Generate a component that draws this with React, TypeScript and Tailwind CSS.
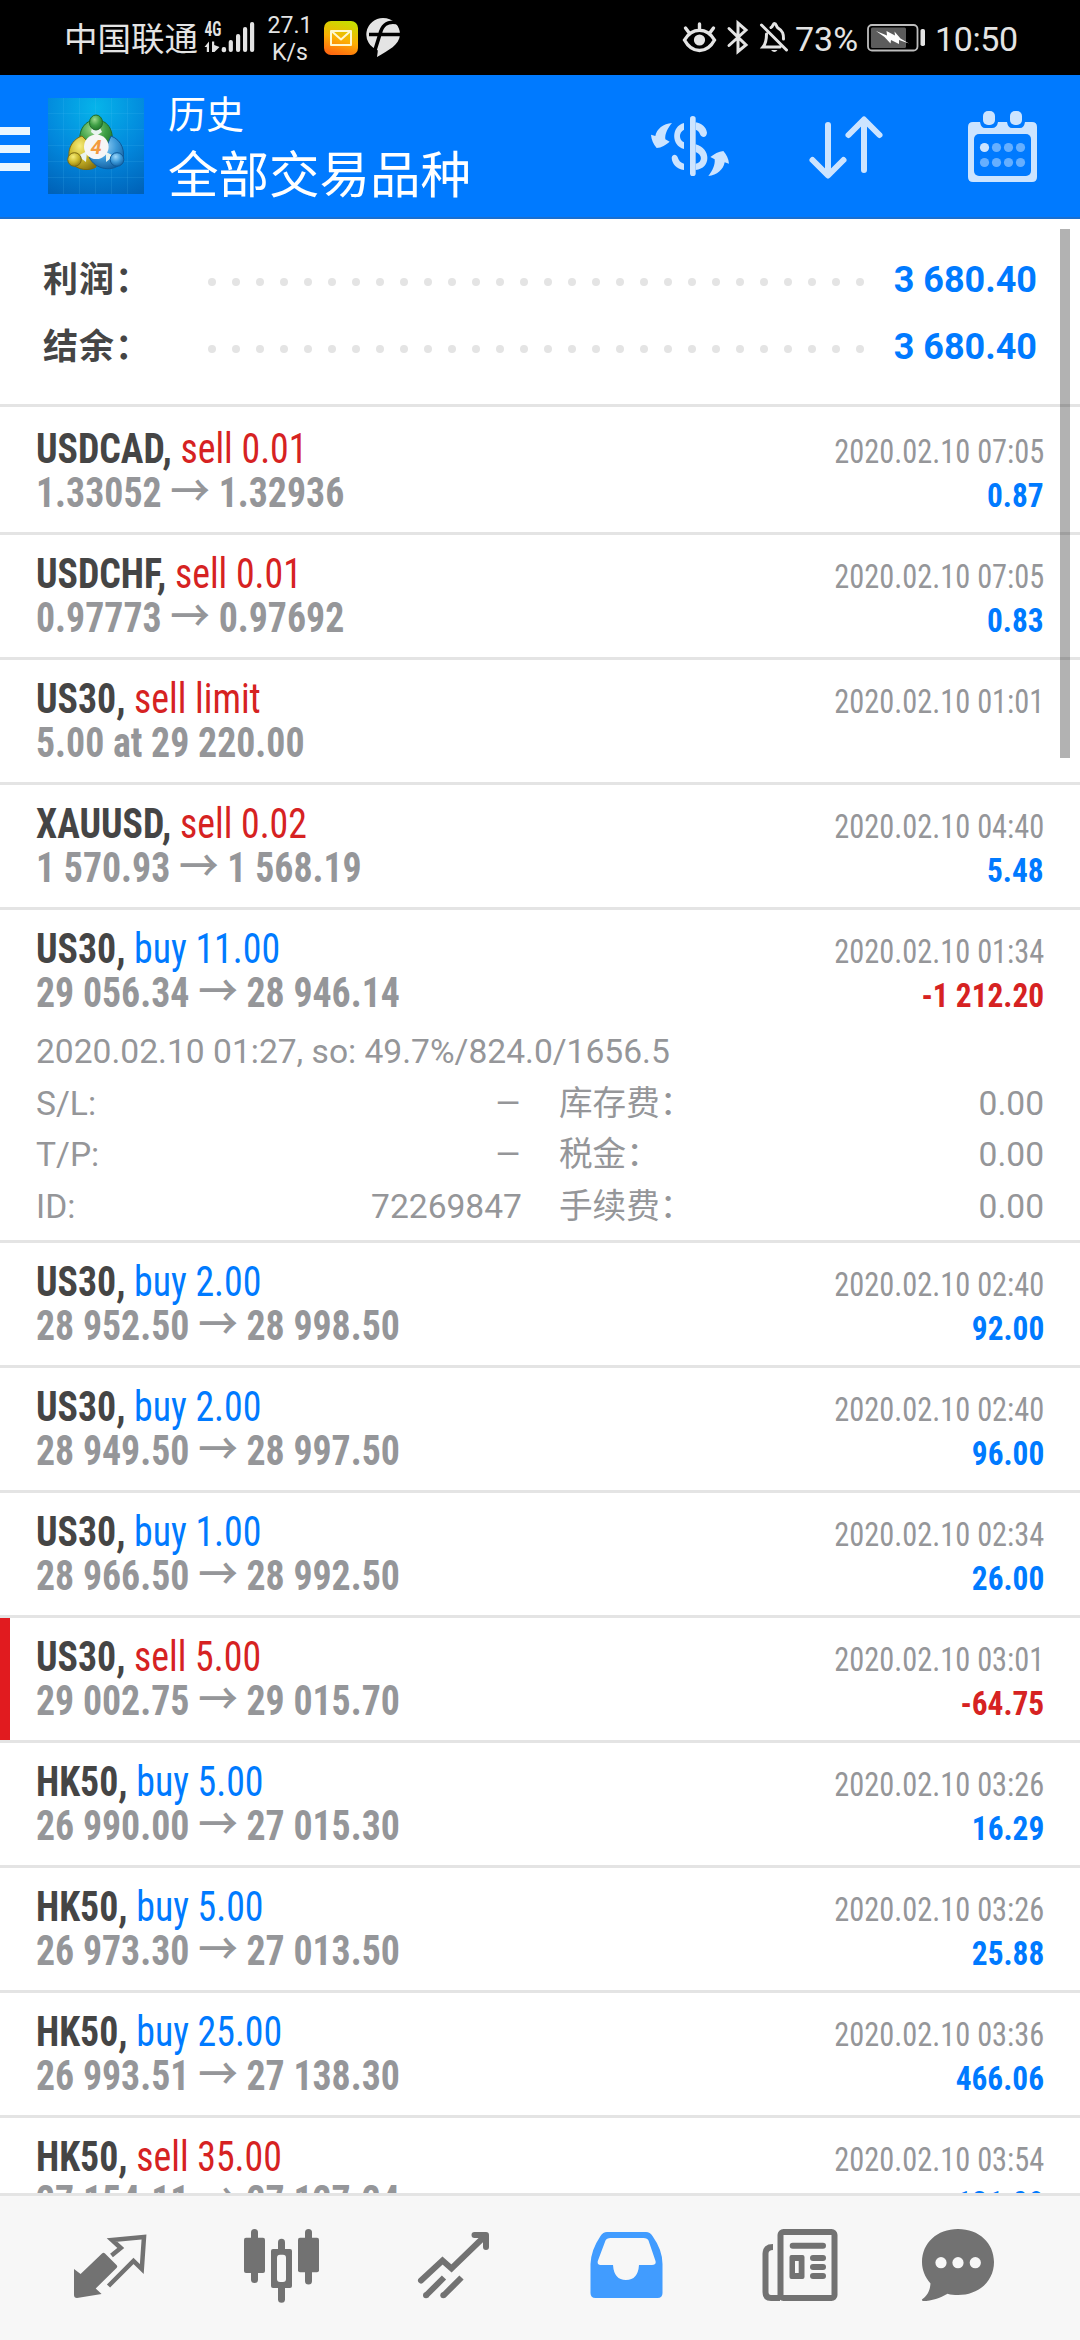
import type { ReactNode } from "react";

type Detail = { label: string; value: string; label2: string; value2: string };

type Deal = {
  symbol: string;
  action: string;
  side: "buy" | "sell";
  from: string;
  to?: string;
  time: string;
  profit?: string;
  marked?: boolean;
  comment?: string;
  details?: Detail[];
};

const summary = [
  { label: "利润：", value: "3 680.40" },
  { label: "结余：", value: "3 680.40" },
];

const deals: Deal[] = [
  { symbol: "USDCAD", action: "sell 0.01", side: "sell", from: "1.33052", to: "1.32936", time: "2020.02.10 07:05", profit: "0.87" },
  { symbol: "USDCHF", action: "sell 0.01", side: "sell", from: "0.97773", to: "0.97692", time: "2020.02.10 07:05", profit: "0.83" },
  { symbol: "US30", action: "sell limit", side: "sell", from: "5.00 at 29 220.00", time: "2020.02.10 01:01" },
  { symbol: "XAUUSD", action: "sell 0.02", side: "sell", from: "1 570.93", to: "1 568.19", time: "2020.02.10 04:40", profit: "5.48" },
  {
    symbol: "US30",
    action: "buy 11.00",
    side: "buy",
    from: "29 056.34",
    to: "28 946.14",
    time: "2020.02.10 01:34",
    profit: "-1 212.20",
    comment: "2020.02.10 01:27, so: 49.7%/824.0/1656.5",
    details: [
      { label: "S/L:", value: "–", label2: "库存费：", value2: "0.00" },
      { label: "T/P:", value: "–", label2: "税金：", value2: "0.00" },
      { label: "ID:", value: "72269847", label2: "手续费：", value2: "0.00" },
    ],
  },
  { symbol: "US30", action: "buy 2.00", side: "buy", from: "28 952.50", to: "28 998.50", time: "2020.02.10 02:40", profit: "92.00" },
  { symbol: "US30", action: "buy 2.00", side: "buy", from: "28 949.50", to: "28 997.50", time: "2020.02.10 02:40", profit: "96.00" },
  { symbol: "US30", action: "buy 1.00", side: "buy", from: "28 966.50", to: "28 992.50", time: "2020.02.10 02:34", profit: "26.00" },
  { symbol: "US30", action: "sell 5.00", side: "sell", from: "29 002.75", to: "29 015.70", time: "2020.02.10 03:01", profit: "-64.75", marked: true },
  { symbol: "HK50", action: "buy 5.00", side: "buy", from: "26 990.00", to: "27 015.30", time: "2020.02.10 03:26", profit: "16.29" },
  { symbol: "HK50", action: "buy 5.00", side: "buy", from: "26 973.30", to: "27 013.50", time: "2020.02.10 03:26", profit: "25.88" },
  { symbol: "HK50", action: "buy 25.00", side: "buy", from: "26 993.51", to: "27 138.30", time: "2020.02.10 03:36", profit: "466.06" },
  { symbol: "HK50", action: "sell 35.00", side: "sell", from: "27 154.11", to: "27 127.24", time: "2020.02.10 03:54", profit: "121.09" },
];

function StatusBar() {
  return (
    <div className="flex h-[75px] shrink-0 bg-black text-[#e4e4e4]">
      <span className="ml-[64px] mt-[16px] w-[140px] text-[33.5px] leading-[48px] whitespace-nowrap">中国联通</span>
      <svg className="h-[75px] w-[54px]" viewBox="204 0 54 75" fill="#e4e4e4">
        <text x="204.5" y="36" fontSize="19.5" fontWeight="600" textLength="17" lengthAdjust="spacingAndGlyphs" fontFamily="Roboto Condensed">
          4G
        </text>
        <path d="M204.5 47 L209 41.5 V52 H206.8 V47 Z M212 41.5 H214.2 V45 L219.5 47 L214.5 52 H212 Z" />
        <rect x="221.7" y="47" width="4.4" height="5.2" rx="2" />
        <rect x="228.7" y="40" width="4.2" height="12" rx="2" />
        <rect x="236" y="34" width="4.2" height="18" rx="2" />
        <rect x="243" y="27" width="4.2" height="25" rx="2" />
        <rect x="250" y="22" width="4.2" height="30" rx="2" />
      </svg>
      <div className="mt-[12px] w-[64px] text-center text-[23px] leading-[27px]">
        <div>27.1</div>
        <div>K/s</div>
      </div>
      <svg className="ml-[2px] h-[75px] w-[34px]" viewBox="324 0 34 75">
        <defs>
          <linearGradient id="mail" x1="0.7" y1="0" x2="0.4" y2="1">
            <stop offset="0" stopColor="#c5e000" />
            <stop offset="0.55" stopColor="#fbb004" />
            <stop offset="1" stopColor="#ff6a10" />
          </linearGradient>
        </defs>
        <rect x="324" y="21" width="34" height="34" rx="7" fill="url(#mail)" />
        <path d="M331 31 H351 V45 H331 Z M332 31.5 L341 39.5 L350 31.5" fill="none" stroke="#fff8d0" strokeWidth="2" strokeLinejoin="round" />
      </svg>
      <svg className="ml-[8px] h-[75px] w-[34px]" viewBox="366 0 34 75">
        <path d="M383 18 A17 16.5 0 0 1 400 35 C399 45 389 50 377 57 C377.5 53 378 51 377.5 50 A17 16.5 0 0 1 383 18 Z" fill="#e4e4e4" />
        <path d="M369 34.5 H400 M399 23 C386 20 382 26 380 34 L375 50" fill="none" stroke="#000" strokeWidth="3.6" />
      </svg>
      <svg className="ml-[282px] h-[75px] w-[108px]" viewBox="682 0 108 75" fill="none" stroke="#e4e4e4" strokeWidth="3.4" strokeLinecap="round">
        <path d="M684.5 40 C692 27 707 27 714.5 40 C707 54 692 54 684.5 40 Z M699.5 28 V24 M688.5 32 L685.5 28 M710.5 32 L713.5 28" />
        <circle cx="699.5" cy="40" r="5.6" fill="#e4e4e4" stroke="none" />
        <path d="M729 28.5 L746 45 L738 51.5 V23 L746 30 L729 45.5" strokeWidth="3" />
        <path d="M761.5 25 L786.5 50 M766.5 34 C766.5 41 765.5 44 763 47 H780 M771 27.5 C773 26.5 773 23.5 774.5 23.5 C776.5 23.5 776 26.5 778 28 C783 31 783.5 34 783.5 39" strokeWidth="3" />
        <path d="M771 50 H777.5 Q774.5 54 771 50 Z" fill="#e4e4e4" stroke="none" />
      </svg>
      <span className="ml-[5px] mt-[15px] w-[71px] text-[34px] leading-[48px]">73%</span>
      <svg className="h-[75px] w-[60px]" viewBox="866 0 60 75">
        <rect x="868" y="25" width="49.5" height="25.5" rx="4" fill="none" stroke="#bdbdbd" strokeWidth="1.8" />
        <rect x="871" y="27.5" width="35" height="20.5" rx="1.5" fill="#5c5c5c" />
        <rect x="920.5" y="29" width="4.5" height="17" rx="1.8" fill="#e4e4e4" />
        <path d="M876 31 L887 35.5 L886.5 31 L895 35.5 L894.5 31.5 L900.5 38.5 L909 43.5 L899 40 L899 44 L891 40 L890.5 43.5 L884.5 37 Z" fill="#fff" />
      </svg>
      <span className="ml-[9px] mt-[15px] text-[34px] leading-[48px] tracking-[-0.4px]">10:50</span>
    </div>
  );
}

function AppLogo() {
  return (
    <svg className="ml-[18px] h-24 w-24" viewBox="0 0 96 96">
      <defs>
        <radialGradient id="sky" cx="0.5" cy="0.1" r="1">
          <stop offset="0" stopColor="#06b4ea" />
          <stop offset="0.55" stopColor="#0287dc" />
          <stop offset="1" stopColor="#0062b8" />
        </radialGradient>
        <radialGradient id="green" cx="0.4" cy="0.3" r="0.8">
          <stop offset="0" stopColor="#9bd98e" />
          <stop offset="0.5" stopColor="#3fa046" />
          <stop offset="1" stopColor="#1a6b25" />
        </radialGradient>
        <radialGradient id="yellow" cx="0.4" cy="0.3" r="0.8">
          <stop offset="0" stopColor="#f6ec7a" />
          <stop offset="0.5" stopColor="#cdb92b" />
          <stop offset="1" stopColor="#86700c" />
        </radialGradient>
        <radialGradient id="blue" cx="0.4" cy="0.3" r="0.8">
          <stop offset="0" stopColor="#9fd8fa" />
          <stop offset="0.5" stopColor="#3a98d8" />
          <stop offset="1" stopColor="#0d5596" />
        </radialGradient>
      </defs>
      <rect width="96" height="96" fill="url(#sky)" />
      <path d="M15.5 0 V96 M31.5 0 V96 M47.5 0 V96 M63.5 0 V96 M79.5 0 V96 M0 15.5 H96 M0 31.5 H96 M0 47.5 H96 M0 63.5 H96 M0 79.5 H96" stroke="#5cc4f5" strokeOpacity="0.14" />
      <g strokeWidth="1">
        <path d="M32 46 C30 32 37 22 48 22 C59 22 66 31 64 46 L56 52 L40 52 Z" fill="url(#green)" stroke="#1f6b2a" />
        <path d="M34 38 C22 42 18 56 23 64 C29 73 42 73 48 69 L46 50 Z" fill="url(#yellow)" stroke="#7c6a10" />
        <path d="M63 38 C74 42 78 54 74 64 C66 75 47 72 41 59 L58 50 Z" fill="url(#blue)" stroke="#0f5a99" />
        <path d="M43 34 L48 38 L54 34 L52 30 H44 Z M30 58 L39 53 L38 64 Z M58 54 L66 58 L58 64 Z" fill="#e9f4f0" />
        <ellipse cx="48" cy="24.5" rx="6.5" ry="7.5" fill="url(#green)" stroke="#1f6b2a" />
        <circle cx="26.5" cy="61.5" r="6.8" fill="url(#yellow)" stroke="#7c6a10" />
        <circle cx="69" cy="61.5" r="6.8" fill="url(#blue)" stroke="#0f5a99" />
      </g>
      <circle cx="48.3" cy="48.7" r="12.3" fill="#f6f6f6" />
      <text x="48" y="56" textAnchor="middle" fontSize="20" fontWeight="700" fontStyle="italic" fontFamily="Roboto" fill="#f29a3e">
        4
      </text>
    </svg>
  );
}

function Header() {
  return (
    <header className="flex h-36 shrink-0 items-center border-b-2 border-[#1a6fd0] bg-[#007aff] text-white">
      <div className="mt-1.5 flex w-[30px] flex-col gap-[10px]">
        <div className="h-2 bg-[#eaf6ff]" />
        <div className="h-2 bg-[#eaf6ff]" />
        <div className="h-2 bg-[#eaf6ff]" />
      </div>
      <AppLogo />
      <div className="ml-6 flex flex-1 flex-col pt-1.5">
        <div className="text-[38px] leading-[54px]">历史</div>
        <div className="text-[50.5px] leading-[68px]">全部交易品种</div>
      </div>
      <svg className="h-[90px] w-[100px]" viewBox="0 0 300 270" fill="#cce4ff">
        <rect x="150" y="45" width="17" height="180" rx="8.5" />
        <path d="M96 66 C70 68 50 84 46 105 L33 101 C34 116 40 128 50 141 C64 140 78 132 89 122 L76 115 C74 98 84 80 96 66 Z" />
        <path d="M205 225 C231 223 250 206 254 184 L267 188 C266 173 259 160 250 150 C236 152 222 159 211 168 L224 175 C226 192 217 210 205 225 Z" />
        <path d="M132 66 C93 76 93 134 132 144 V124 C116 116 116 94 132 86 Z" />
        <path d="M167 64 C185 67 199 79 201 95 C200 110 186 112 180 100 C178 93 174 89 167 86 Z" />
        <path d="M167 130 C214 142 214 203 167 207 V188 C188 184 188 161 167 153 Z" />
        <path d="M132 207 C109 203 96 188 95 170 C98 158 110 160 113 169 C116 179 122 186 132 188 Z" />
      </svg>
      <svg className="ml-[64px] h-[90px] w-[84px]" viewBox="804 100 84 90" fill="none" stroke="#cce4ff" strokeWidth="6" strokeLinecap="round" strokeLinejoin="round">
        <path d="M828 124 V174 M812.5 159 L828 174.5 L843.5 159" />
        <path d="M864 169 V119 M848.5 134 L864 118.5 L879.5 134" />
      </svg>
      <svg className="mr-[34px] ml-[70px] h-[90px] w-[88px]" viewBox="958 100 88 90">
        <path d="M973 121 H980 Q981 127 985 127 H992 Q997 127 998 121 H1007 Q1008 127 1012 127 H1020 Q1024 127 1025 121 H1032 Q1037 121 1037 126 V176 Q1037 181 1032 181 H973 Q968 181 968 176 V126 Q968 121 973 121 Z" fill="#cce4ff" />
        <rect x="974" y="133" width="57" height="42" rx="5" fill="#007aff" />
        <rect x="983" y="110" width="12" height="14" rx="5" fill="#cce4ff" />
        <rect x="1010" y="110" width="12" height="14" rx="5" fill="#cce4ff" />
        <g fill="#66afff">
          <circle cx="984.5" cy="146.5" r="4.6" fill="#cce4ff" />
          <circle cx="996.5" cy="146.5" r="4.6" />
          <circle cx="1008.5" cy="146.5" r="4.6" />
          <circle cx="1020.5" cy="146.5" r="4.6" />
          <circle cx="984.5" cy="161.5" r="4.6" />
          <circle cx="996.5" cy="161.5" r="4.6" />
          <circle cx="1008.5" cy="161.5" r="4.6" />
          <circle cx="1020.5" cy="161.5" r="4.6" />
        </g>
      </svg>
    </header>
  );
}

function Summary() {
  return (
    <div className="h-[188px] border-b-[3px] border-[#e4e4e4] px-[43px] pt-[28px]">
      {summary.map((row) => (
        <div key={row.label} className="flex h-[67px] items-center text-[36px] leading-[67px] font-bold">
          <span className="w-[165px] text-[35px] tracking-[1px] text-[#454545]">{row.label}</span>
          <div className="mt-0.5 flex w-[656px] justify-between">
            {Array.from({ length: 28 }, (_, i) => (
              <span key={i} className="size-2 rounded-full bg-[#e4e4e4]" />
            ))}
          </div>
          <span className="flex-1 text-right whitespace-nowrap text-[#007aff]">{row.value}</span>
        </div>
      ))}
    </div>
  );
}

function DealRow({ deal, first }: { deal: Deal; first: boolean }) {
  const negative = deal.profit?.startsWith("-");
  return (
    <div
      className={`flex flex-col border-b-[3px] border-[#e4e4e4] px-9 font-['Roboto_Condensed','Noto_Sans_CJK_SC',sans-serif] ${
        first ? "h-[128px] pt-[19px]" : deal.details ? "h-[333px] pt-4" : "h-[125px] pt-4"
      } ${deal.marked ? "bg-[linear-gradient(to_right,#e11b1f_10px,transparent_10px)]" : ""}`}
    >
      <div className="flex h-11 items-baseline justify-between whitespace-nowrap leading-[45px]">
        <div className="origin-left scale-x-90 text-[42px] [font-kerning:none]">
          <span className="font-bold text-[#454545] [font-kerning:normal]">{deal.symbol},</span>{" "}
          <span className={deal.side === "buy" ? "text-[#007aff]" : "text-[#d62222]"}>{deal.action}</span>
        </div>
        <div className="origin-right scale-x-92 text-[33px] text-[#959699]">{deal.time}</div>
      </div>
      <div className="flex h-[45px] items-baseline justify-between whitespace-nowrap leading-[45px]">
        <div className="origin-left scale-x-90 text-[42px] font-bold text-[#959699]">
          {deal.from}
          {deal.to && (
            <>
              {" "}
              <span className="font-['Noto_Sans_CJK_SC'] text-[44px] leading-[0] font-medium">→</span> {deal.to}
            </>
          )}
        </div>
        <div className={`origin-right scale-x-95 text-[33px] font-bold ${negative ? "text-[#d62222]" : "text-[#007aff]"}`}>{deal.profit}</div>
      </div>
      {deal.details && (
        <div className="mt-[11px] font-['Roboto','Noto_Sans_CJK_SC',sans-serif] text-[33.6px] leading-[51.5px] text-[#959699]">
          <div>{deal.comment}</div>
          {deal.details.map((d) => (
            <div key={d.label} className="flex h-[51.5px]">
              <span className="flex-1">{d.label}</span>
              <span className={`mr-[37px] ${d.value === "–" ? "origin-right scale-x-125" : ""}`}>{d.value}</span>
              <span className="w-[300px]">{d.label2}</span>
              <span className="w-[185px] text-right">{d.value2}</span>
            </div>
          ))}
        </div>
      )}
    </div>
  );
}

function Tab({ className, viewBox, children }: { className: string; viewBox: string; children: ReactNode }) {
  return (
    <svg className={`h-36 shrink-0 ${className}`} viewBox={viewBox} fill="#727272">
      {children}
    </svg>
  );
}

function TabBar() {
  return (
    <nav className="flex h-[147px] shrink-0 border-t-[3px] border-[#e4e4e4] bg-[#f7f7f7] pl-[25px]">
      <Tab className="w-[170px]" viewBox="25 96 170 144">
        <path d="M74 169 L80.6 174 L102 153.5 Q103.5 152 105 153.5 L116.5 165 Q118 166.7 116.5 168 L95.7 188.5 L101.6 194 L77 198 Q74 198 74 195 Z" />
        <path d="M111.5 155.5 L120.8 148 L112 140 L144 137 L141.8 169 L133.5 161 L108.5 186" fill="none" stroke="#727272" strokeWidth="4.5" />
      </Tab>
      <Tab className="w-[172px]" viewBox="195 96 172 144">
        <rect x="244" y="137.7" width="21" height="35.3" rx="2" />
        <rect x="251" y="129" width="7" height="54" rx="3.5" />
        <rect x="298" y="137.7" width="21" height="34.6" rx="2" />
        <rect x="305" y="129" width="7" height="55.5" rx="3.5" />
        <rect x="271" y="149" width="21" height="39" rx="2" />
        <rect x="278" y="138.7" width="7" height="64" rx="3.5" />
        <rect x="277" y="154.7" width="9" height="27.3" rx="3" fill="#f7f7f7" />
      </Tab>
      <Tab className="w-[172px]" viewBox="367 96 172 144">
        <g fill="none" stroke="#727272" strokeWidth="6" strokeLinecap="round" strokeLinejoin="round">
          <path d="M421 180.5 L442.5 160.5 L451.5 168.5 L485 136" strokeLinejoin="miter" />
          <path d="M474.5 135 H486 V147" />
        </g>
        <path d="M426 195.5 L444 177.5 M443.5 195.5 L461.5 177.5" stroke="#727272" strokeWidth="6" />
        <circle cx="426" cy="195.3" r="3" />
        <circle cx="443.3" cy="195.3" r="3" />
      </Tab>
      <Tab className="w-[174px]" viewBox="539 96 174 144">
        <path
          fillRule="evenodd"
          fill="#419cff"
          d="M607 132 H646 Q650 132 652.5 136 Q662.5 150 662.5 164 V193 Q662.5 198 657.5 198 H595.5 Q590.5 198 590.5 193 V164 Q591 150 600.5 136 Q603 132 607 132 Z M610.5 138 Q606.5 138 605.5 140.5 L597.8 161 Q597 165 600.5 165 H613 Q614 180 626 180 Q638 180 639 165 H652 Q656.5 165 655.5 161 L648.5 140.5 Q647.5 138 643.5 138 Z"
        />
      </Tab>
      <Tab className="w-[174px]" viewBox="713 96 174 144">
        <rect x="780.5" y="132" width="54" height="66" rx="3" fill="none" stroke="#727272" strokeWidth="6" />
        <path d="M773 147 Q765.5 147 765.5 153.5 V192 Q765.5 198 771 198 H780" fill="none" stroke="#727272" strokeWidth="6" />
        <rect x="789.7" y="142.7" width="36.3" height="6" rx="3" />
        <path fillRule="evenodd" d="M791.5 155 H802.5 Q804.5 155 804.5 157 V177 Q804.5 179 802.5 179 H791.5 Q789.5 179 789.5 177 V157 Q789.5 155 791.5 155 Z M795 161 V173 H798.7 V161 Z" />
        <rect x="810" y="155" width="16" height="6" rx="3" />
        <rect x="810" y="164" width="16" height="6" rx="3" />
        <rect x="810" y="173" width="16" height="6" rx="3" />
      </Tab>
      <Tab className="w-[142px]" viewBox="887 96 142 144">
        <path d="M958 129 C979 129 994 143 994 162 C994 181 979 195 958 195 C954 195 951 194.7 947.5 193.7 C940 198 932 201 923 201 Q921 200.5 922.5 199 C928 195 930 190 930.5 183.5 C925 177 922 170 922 162 C922 143 937 129 958 129 Z" />
        <circle cx="941" cy="162.7" r="5.6" fill="#f7f7f7" />
        <circle cx="958" cy="162.7" r="5.6" fill="#f7f7f7" />
        <circle cx="975.3" cy="162.7" r="5.6" fill="#f7f7f7" />
      </Tab>
    </nav>
  );
}

export default function App() {
  return (
    <div className="flex h-[2340px] w-[1080px] flex-col overflow-hidden bg-white font-['Roboto','Noto_Sans_CJK_SC',sans-serif]">
      <StatusBar />
      <Header />
      <main className="relative min-h-0 flex-1 overflow-hidden">
        <Summary />
        {deals.map((deal, i) => (
          <DealRow key={i} deal={deal} first={i === 0} />
        ))}
        <div className="absolute top-[10px] right-[10px] h-[529px] w-[10px] bg-black/30" />
      </main>
      <TabBar />
    </div>
  );
}
